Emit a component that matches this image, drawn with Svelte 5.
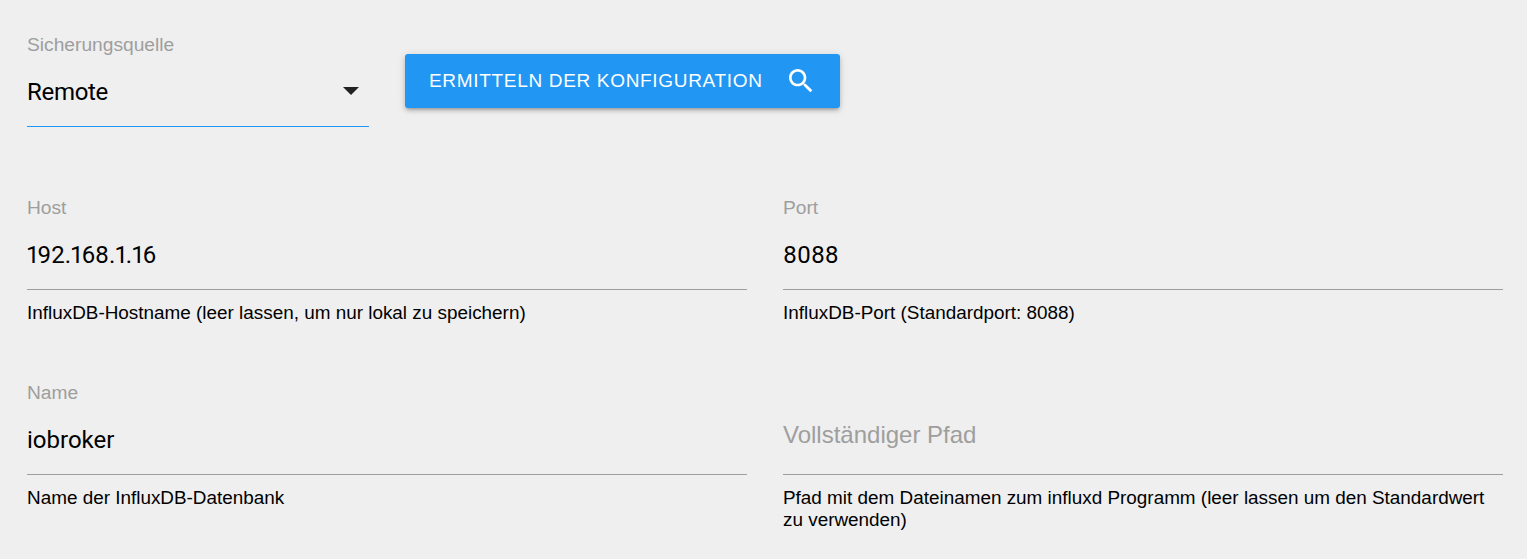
<script>
	const rows = [
		[
			{ label: 'Host', value: '192.168.1.16', help: 'InfluxDB-Hostname (leer lassen, um nur lokal zu speichern)' },
			{ label: 'Port', value: '8088', help: 'InfluxDB-Port (Standardport: 8088)' }
		],
		[
			{ label: 'Name', value: 'iobroker', help: 'Name der InfluxDB-Datenbank' },
			{ placeholder: 'Vollständiger Pfad', help: 'Pfad mit dem Dateinamen zum influxd Programm (leer lassen um den Standardwert zu verwenden)' }
		]
	];
</script>

<div class="page">
	<div class="source">
		<div class="select">
			<span class="label">Sicherungsquelle</span>
			<div class="select-value">
				<span>Remote</span>
				<svg class="arrow" viewBox="0 0 16 8" width="16" height="8"><path d="M0 0h16L8 8z" fill="#212121" /></svg>
			</div>
		</div>
		<button class="detect">
			<span>ERMITTELN DER KONFIGURATION</span>
			<svg viewBox="0 0 24 24" width="32" height="32">
				<path fill="#fff" d="M15.5 14h-.79l-.28-.27C15.41 12.59 16 11.11 16 9.5 16 5.91 13.09 3 9.5 3S3 5.91 3 9.5 5.91 16 9.5 16c1.61 0 3.09-.59 4.23-1.57l.27.28v.79l5 4.99L20.49 19l-4.99-5zm-6 0C7.01 14 5 11.99 5 9.5S7.01 5 9.5 5 14 7.01 14 9.5 11.99 14 9.5 14z" />
			</svg>
		</button>
	</div>

	{#each rows as row}
		<div class="row">
			{#each row as field}
				<div class="field">
					<span class="label">{field.label ?? ''}</span>
					<div class="input" class:placeholder={field.placeholder}>{field.value ?? field.placeholder}</div>
					<p class="help">{field.help}</p>
				</div>
			{/each}
		</div>
	{/each}
</div>

<style>
	:global(body) {
		background: #efefef;
	}
	.page {
		box-sizing: border-box;
		height: 559px;
		padding: 33px 24px 0 27px;
		background: #efefef;
		font-family: "Liberation Sans", Roboto, sans-serif;
		overflow: hidden;
	}
	.source {
		display: flex;
		align-items: flex-start;
		gap: 36px;
		height: 163px;
	}
	.select {
		width: 342px;
	}
	.label {
		display: block;
		height: 24px;
		font-size: 19.2px;
		line-height: 24px;
		color: #9e9e9e;
	}
	.select-value {
		display: flex;
		align-items: center;
		justify-content: space-between;
		height: 70px;
		box-sizing: border-box;
		padding-right: 10px;
		font-family: Roboto, sans-serif;
		font-size: 24px;
		letter-spacing: -0.3px;
		color: #000;
		border-bottom: 1px solid #2196f3;
	}
	.arrow {
		margin-bottom: 1px;
	}
	.detect {
		display: flex;
		align-items: center;
		gap: 22px;
		width: 435px;
		height: 54px;
		margin-top: 21px;
		padding: 0 24px;
		border: 0;
		border-radius: 3px;
		background: #2196f3;
		color: #fff;
		font: 400 19px "Liberation Sans", Roboto, sans-serif;
		letter-spacing: 0.68px;
		white-space: nowrap;
		box-shadow: 0 3px 3px -2px rgba(0, 0, 0, 0.2), 0 3px 4px 0 rgba(0, 0, 0, 0.14), 0 1px 8px 0 rgba(0, 0, 0, 0.12);
	}
	.detect svg {
		flex: none;
	}
	.row {
		display: grid;
		grid-template-columns: 720px 720px;
		gap: 36px;
		height: 185px;
	}
	.input {
		box-sizing: border-box;
		height: 70px;
		padding-top: 17px;
		font-family: Roboto, sans-serif;
		font-variant-numeric: proportional-nums;
		font-size: 24px;
		line-height: 36px;
		color: #000;
		border-bottom: 1px solid #9e9e9e;
	}
	.input.placeholder {
		padding-top: 12px;
		font-family: "Liberation Sans", sans-serif;
		color: #9e9e9e;
	}
	.help {
		margin: 12px 0 0;
		font-size: 18.9px;
		line-height: 22px;
		color: #000;
	}
</style>
